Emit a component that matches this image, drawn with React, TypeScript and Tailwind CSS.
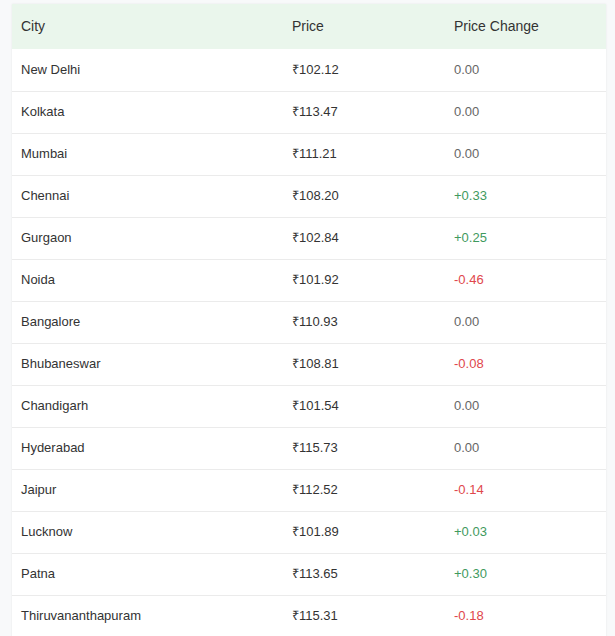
import React from 'react'

interface CityPrice {
  city: string
  price: string
  change: string
}

const rows: CityPrice[] = [
  { city: 'New Delhi', price: '102.12', change: '0.00' },
  { city: 'Kolkata', price: '113.47', change: '0.00' },
  { city: 'Mumbai', price: '111.21', change: '0.00' },
  { city: 'Chennai', price: '108.20', change: '+0.33' },
  { city: 'Gurgaon', price: '102.84', change: '+0.25' },
  { city: 'Noida', price: '101.92', change: '-0.46' },
  { city: 'Bangalore', price: '110.93', change: '0.00' },
  { city: 'Bhubaneswar', price: '108.81', change: '-0.08' },
  { city: 'Chandigarh', price: '101.54', change: '0.00' },
  { city: 'Hyderabad', price: '115.73', change: '0.00' },
  { city: 'Jaipur', price: '112.52', change: '-0.14' },
  { city: 'Lucknow', price: '101.89', change: '+0.03' },
  { city: 'Patna', price: '113.65', change: '+0.30' },
  { city: 'Thiruvananthapuram', price: '115.31', change: '-0.18' },
]

const changeColor = (change: string) => {
  if (change.startsWith('+')) return 'text-[#3f9a5e]'
  if (change.startsWith('-')) return 'text-[#e0474c]'
  return 'text-[#666666]'
}

export default function App() {
  return (
    <div className="min-h-screen bg-[#f8f9fa] pl-[12px] pt-[4px] font-['Liberation_Sans',Arial,sans-serif]">
      <table className="w-[594px] table-fixed border-collapse bg-white shadow-[0_0_2px_rgba(0,0,0,0.08)]">
        <colgroup>
          <col className="w-[270px]" />
          <col className="w-[162px]" />
          <col className="w-[162px]" />
        </colgroup>
        <thead>
          <tr className="h-[45px] bg-[#eaf6ec] text-left">
            <th className="pl-[9px] text-[14px] font-normal text-[#333333]">City</th>
            <th className="pl-[10px] text-[14px] font-normal text-[#333333]">Price</th>
            <th className="pl-[10px] text-[14px] font-normal text-[#333333]">Price Change</th>
          </tr>
        </thead>
        <tbody>
          {rows.map((row) => (
            <tr key={row.city} className="h-[42px] border-b border-[#ebebeb] text-[13px]">
              <td className="pl-[9px] text-[#333333]">{row.city}</td>
              <td className="pl-[10px] text-[#333333]">₹{row.price}</td>
              <td className={`pl-[10px] ${changeColor(row.change)}`}>{row.change}</td>
            </tr>
          ))}
        </tbody>
      </table>
    </div>
  )
}
